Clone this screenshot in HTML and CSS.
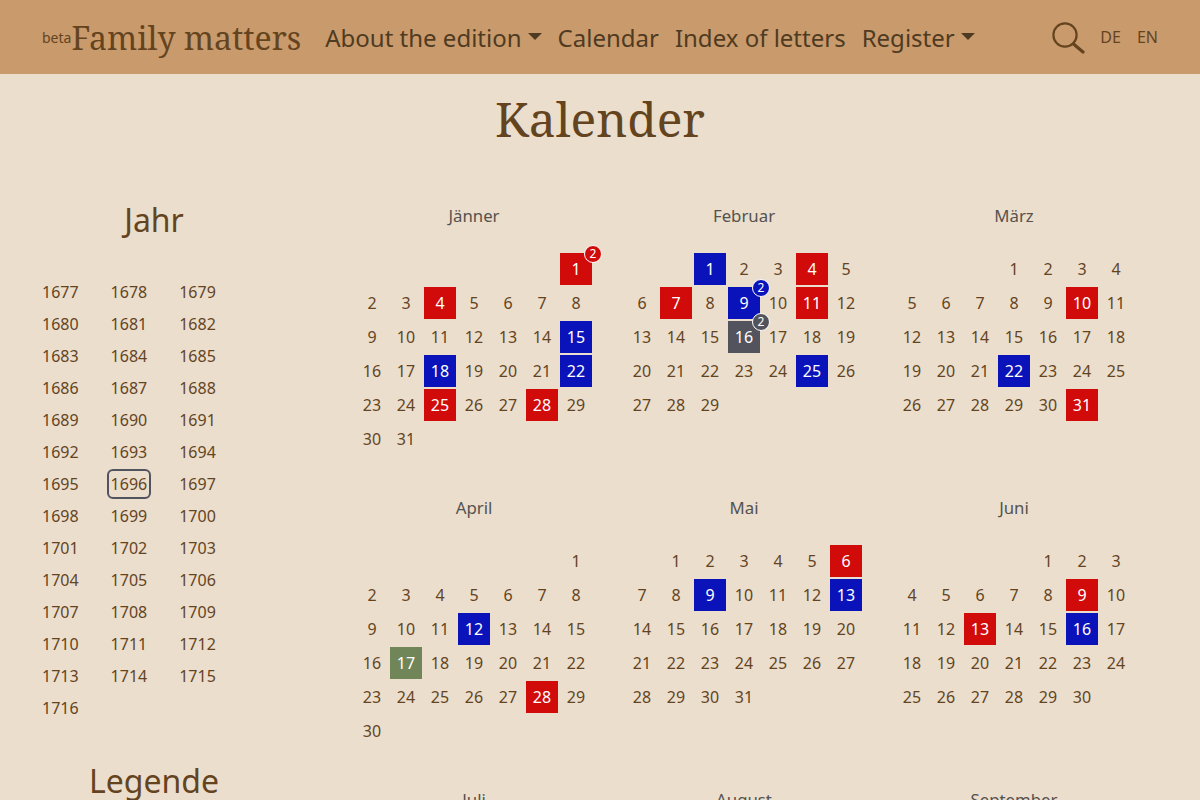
FILE: index.html
```html
<!DOCTYPE html>
<html lang="de">
<head>
<meta charset="utf-8">
<title>Kalender – Family matters</title>
<link rel="stylesheet" href="styles.css">
</head>
<body>
<header class="navbar">
  <a class="brand" href="#"><small class="beta">beta</small>Family matters</a>
  <nav class="nav">
    <a href="#" class="dropdown">About the edition</a>
    <a href="#">Calendar</a>
    <a href="#">Index of letters</a>
    <a href="#" class="dropdown">Register</a>
  </nav>
  <a href="#" class="search" aria-label="Search">
    <svg width="34" height="34" viewBox="0 0 34 34" fill="none" stroke="currentColor"><circle cx="13" cy="15" r="11.6" stroke-width="2.2"/><path d="M21.5 24l9.5 8" stroke-width="3.2" stroke-linecap="round"/></svg>
  </a>
  <div class="langs"><a href="#">DE</a><a href="#">EN</a></div>
</header>
<h1 class="page-title">Kalender</h1>
<main class="layout">
  <aside class="side">
    <h2>Jahr</h2>
    <div class="years">
      <a>1677</a><a>1678</a><a>1679</a><a>1680</a><a>1681</a><a>1682</a><a>1683</a><a>1684</a><a>1685</a>
      <a>1686</a><a>1687</a><a>1688</a><a>1689</a><a>1690</a><a>1691</a><a>1692</a><a>1693</a><a>1694</a>
      <a>1695</a><a class="current">1696</a><a>1697</a><a>1698</a><a>1699</a><a>1700</a><a>1701</a><a>1702</a><a>1703</a>
      <a>1704</a><a>1705</a><a>1706</a><a>1707</a><a>1708</a><a>1709</a><a>1710</a><a>1711</a><a>1712</a>
      <a>1713</a><a>1714</a><a>1715</a><a>1716</a>
    </div>
    <h2 class="legend">Legende</h2>
  </aside>
  <section class="months">
    <div class="month"><h3>Jänner</h3><div class="days">
      <span class="s6 red">1<b class="badge red">2</b></span>
      <span>2</span><span>3</span><span class="red">4</span><span>5</span><span>6</span><span>7</span><span>8</span>
      <span>9</span><span>10</span><span>11</span><span>12</span><span>13</span><span>14</span><span class="blue">15</span>
      <span>16</span><span>17</span><span class="blue">18</span><span>19</span><span>20</span><span>21</span><span class="blue">22</span>
      <span>23</span><span>24</span><span class="red">25</span><span>26</span><span>27</span><span class="red">28</span><span>29</span>
      <span>30</span><span>31</span>
    </div></div>
    <div class="month"><h3>Februar</h3><div class="days">
      <span class="s2 blue">1</span><span>2</span><span>3</span><span class="red">4</span><span>5</span>
      <span>6</span><span class="red">7</span><span>8</span><span class="blue">9<b class="badge blue">2</b></span><span>10</span><span class="red">11</span><span>12</span>
      <span>13</span><span>14</span><span>15</span><span class="grey">16<b class="badge grey">2</b></span><span>17</span><span>18</span><span>19</span>
      <span>20</span><span>21</span><span>22</span><span>23</span><span>24</span><span class="blue">25</span><span>26</span>
      <span>27</span><span>28</span><span>29</span>
    </div></div>
    <div class="month"><h3>März</h3><div class="days">
      <span class="s3">1</span><span>2</span><span>3</span><span>4</span>
      <span>5</span><span>6</span><span>7</span><span>8</span><span>9</span><span class="red">10</span><span>11</span>
      <span>12</span><span>13</span><span>14</span><span>15</span><span>16</span><span>17</span><span>18</span>
      <span>19</span><span>20</span><span>21</span><span class="blue">22</span><span>23</span><span>24</span><span>25</span>
      <span>26</span><span>27</span><span>28</span><span>29</span><span>30</span><span class="red">31</span>
    </div></div>
    <div class="month"><h3>April</h3><div class="days">
      <span class="s6">1</span>
      <span>2</span><span>3</span><span>4</span><span>5</span><span>6</span><span>7</span><span>8</span>
      <span>9</span><span>10</span><span>11</span><span class="blue">12</span><span>13</span><span>14</span><span>15</span>
      <span>16</span><span class="green">17</span><span>18</span><span>19</span><span>20</span><span>21</span><span>22</span>
      <span>23</span><span>24</span><span>25</span><span>26</span><span>27</span><span class="red">28</span><span>29</span>
      <span>30</span>
    </div></div>
    <div class="month"><h3>Mai</h3><div class="days">
      <span class="s1">1</span><span>2</span><span>3</span><span>4</span><span>5</span><span class="red">6</span>
      <span>7</span><span>8</span><span class="blue">9</span><span>10</span><span>11</span><span>12</span><span class="blue">13</span>
      <span>14</span><span>15</span><span>16</span><span>17</span><span>18</span><span>19</span><span>20</span>
      <span>21</span><span>22</span><span>23</span><span>24</span><span>25</span><span>26</span><span>27</span>
      <span>28</span><span>29</span><span>30</span><span>31</span>
    </div></div>
    <div class="month"><h3>Juni</h3><div class="days">
      <span class="s4">1</span><span>2</span><span>3</span>
      <span>4</span><span>5</span><span>6</span><span>7</span><span>8</span><span class="red">9</span><span>10</span>
      <span>11</span><span>12</span><span class="red">13</span><span>14</span><span>15</span><span class="blue">16</span><span>17</span>
      <span>18</span><span>19</span><span>20</span><span>21</span><span>22</span><span>23</span><span>24</span>
      <span>25</span><span>26</span><span>27</span><span>28</span><span>29</span><span>30</span>
    </div></div>
    <div class="month"><h3>Juli</h3></div>
    <div class="month"><h3>August</h3></div>
    <div class="month"><h3>September</h3></div>
  </section>
</main>
</body>
</html>
```
FILE: styles.css
```css
* { box-sizing: border-box; }
html, body { margin: 0; height: 800px; overflow: hidden; }
body {
  background: #ebdecd;
  color: #64441f;
  font-family: "Noto Sans", sans-serif;
  font-size: 16px;
  line-height: 1.5;
}
a { color: inherit; text-decoration: none; }

.navbar {
  display: flex;
  align-items: center;
  height: 74px;
  padding: 0 42px;
  background: #c99a6c;
}
.brand {
  display: flex;
  align-items: baseline;
  margin-top: 8px;
  font-family: "Noto Serif", "DejaVu Serif Condensed", "Liberation Serif", serif;
  font-size: 32px;
  line-height: 48px;
  color: #64441f;
}
.beta {
  font-family: "Noto Sans", sans-serif;
  font-size: 14px;
  position: relative;
  top: -7px;
}
.nav {
  display: flex;
  gap: 16px;
  margin: 2px 0 0 24px;
  font-size: 24px;
  color: #4f3a22;
}
.dropdown::after {
  content: "";
  display: inline-block;
  margin-left: 6px;
  vertical-align: 7px;
  border-top: 7px solid currentColor;
  border-left: 7px solid transparent;
  border-right: 7px solid transparent;
}
.search {
  display: flex;
  margin-left: auto;
  color: #64441f;
}
.langs {
  display: flex;
  gap: 16px;
  margin-left: 14px;
}

.page-title {
  margin: 11px 0 0;
  height: 68px;
  text-align: center;
  font-family: "Noto Serif", "DejaVu Serif Condensed", "Liberation Serif", serif;
  font-size: 48px;
  font-weight: 400;
  line-height: 68px;
}

.layout { display: flex; margin-top: 43px; }

.side { flex: 0 0 308px; }
.side h2 {
  margin: 0;
  text-align: center;
  font-size: 32px;
  font-weight: 400;
  line-height: 48px;
}
.years {
  display: grid;
  grid-template-columns: repeat(3, 68.6px);
  grid-auto-rows: 32px;
  margin: 32px 0 0 42px;
}
.years a {
  display: flex;
  align-items: center;
}
.years .current {
  width: 44px;
  height: 30px;
  margin: 1px 0 0 -3.6px;
  padding-left: 1.6px;
  border: 2px solid #52535c;
  border-radius: 6px;
}
.side .legend { margin-top: 33px; }

.months {
  display: grid;
  grid-template-columns: repeat(3, 238px);
  grid-auto-rows: 292px;
  column-gap: 32px;
  margin: 8px 0 0 47px;
}
.month h3 {
  margin: 0 0 24px;
  text-align: center;
  font-size: 16.8px;
  font-weight: 400;
  line-height: 24px;
  color: #55534f;
}
.days {
  display: grid;
  grid-template-columns: repeat(7, 34px);
  grid-auto-rows: 34px;
}
.days span {
  position: relative;
  display: flex;
  align-items: center;
  justify-content: center;
  margin: 1px;
}
.s1 { grid-column-start: 2; }
.s2 { grid-column-start: 3; }
.s3 { grid-column-start: 4; }
.s4 { grid-column-start: 5; }
.s6 { grid-column-start: 7; }

.red { background: #d10a0a; color: #fff; }
.blue { background: #0a12b9; color: #fff; }
.grey { background: #52535c; color: #fff; }
.days .green { background: #708558; color: #fff; }

.badge {
  position: absolute;
  top: -8px;
  right: -10px;
  display: flex;
  align-items: center;
  justify-content: center;
  width: 18px;
  height: 18px;
  border: 1px solid #fff;
  border-radius: 50%;
  font-size: 12px;
  font-weight: 400;
  line-height: 1;
}
```
